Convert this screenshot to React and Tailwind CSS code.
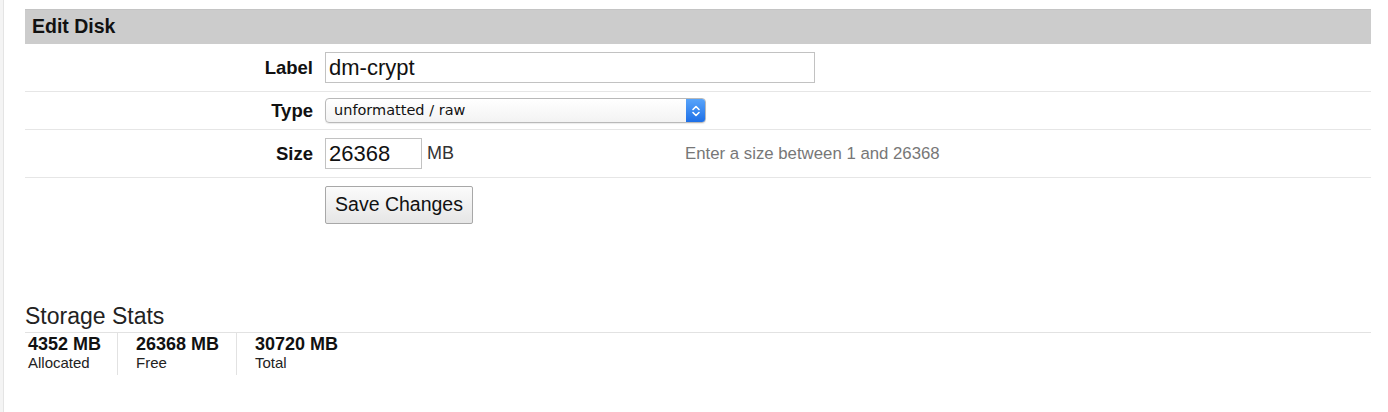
import React from "react";

function Stepper() {
  return (
    <div className="flex h-full w-[20px] items-center justify-center rounded-r-[4px] bg-gradient-to-b from-[#5aa6fb] to-[#1b6de6]">
      <svg width="10" height="14" viewBox="0 0 10 14" fill="none">
        <path d="M2 5.5 L5 2.5 L8 5.5" stroke="#fff" strokeWidth="1.6" strokeLinecap="round" strokeLinejoin="round" />
        <path d="M2 8.5 L5 11.5 L8 8.5" stroke="#fff" strokeWidth="1.6" strokeLinecap="round" strokeLinejoin="round" />
      </svg>
    </div>
  );
}

function Row({ label, children, h }) {
  return (
    <div className={`flex items-center border-b border-[#e6e6e6] ${h}`}>
      <div className="w-[288px] shrink-0 text-right text-[18.5px] font-bold text-[#111]">{label}</div>
      <div className="ml-[12px] flex items-center">{children}</div>
    </div>
  );
}

export default function App() {
  return (
    <div
      className="flex h-[412px] w-[1388px] bg-white text-[#111]"
      style={{ fontFamily: '"Liberation Sans", Arial, Helvetica, sans-serif' }}
    >
      <div className="h-full w-[4px] shrink-0 border-r border-[#e4e4e4] bg-[#f4f4f4]" />
      <div className="ml-[21px] w-[1346px] pt-[9px]">
        <div className="flex h-[35px] items-center border-t border-[#c4c4c4] bg-[#cccccc] pl-[7px] text-[19.5px] font-bold text-[#111]">
          Edit Disk
        </div>

        <Row label="Label" h="h-[48px]">
          <div className="flex h-[31px] w-[490px] items-center border border-[#c2c2c2] bg-white pl-[3px] text-[22px] text-[#111]">
            dm-crypt
          </div>
        </Row>

        <Row label="Type" h="h-[38px]">
          <div className="flex h-[25px] w-[381px] items-stretch overflow-hidden rounded-[4px] border border-[#b9b9b9] bg-gradient-to-b from-white to-[#f3f3f3] shadow-[0_1px_1px_rgba(0,0,0,0.08)]">
            <div
              className="flex flex-1 items-center pl-[8px] text-[14.5px] text-[#111]"
              style={{ fontFamily: '"DejaVu Sans", Verdana, sans-serif' }}
            >
              unformatted / raw
            </div>
            <div className="-my-px -mr-px">
              <Stepper />
            </div>
          </div>
        </Row>

        <Row label="Size" h="h-[48px]">
          <div className="flex w-[360px] items-center">
            <div className="flex h-[31px] w-[97px] items-center border border-[#c2c2c2] bg-white pl-[3px] text-[22px] text-[#111]">
              26368
            </div>
            <span className="ml-[5px] text-[18px] text-[#333]">MB</span>
          </div>
          <span className="text-[16.8px] text-[#777]">Enter a size between 1 and 26368</span>
        </Row>

        <div className="flex pt-[8px]">
          <div className="ml-[300px] flex h-[38px] w-[148px] items-center justify-center rounded-[2px] border border-[#a8a8a8] bg-gradient-to-b from-[#fbfbfb] to-[#e6e6e6] text-[19.5px] text-[#111]">
            Save Changes
          </div>
        </div>

        <div className="mt-[78px] border-b border-[#e2e2e2] pb-[2px] text-[23px] leading-[28px] text-[#222]">
          Storage Stats
        </div>

        <div className="flex">
          <div className="w-[93px] border-r border-[#e2e2e2] pb-[3px] pl-[3px] pt-[1px]">
            <div className="text-[18px] font-bold leading-[20px]">4352 MB</div>
            <div className="text-[15px] leading-[18px] text-[#222]">Allocated</div>
          </div>
          <div className="w-[119px] border-r border-[#e2e2e2] pb-[3px] pl-[18px] pt-[1px]">
            <div className="text-[18px] font-bold leading-[20px]">26368 MB</div>
            <div className="text-[15px] leading-[18px] text-[#222]">Free</div>
          </div>
          <div className="pb-[3px] pl-[18px] pt-[1px]">
            <div className="text-[18px] font-bold leading-[20px]">30720 MB</div>
            <div className="text-[15px] leading-[18px] text-[#222]">Total</div>
          </div>
        </div>
      </div>
    </div>
  );
}
